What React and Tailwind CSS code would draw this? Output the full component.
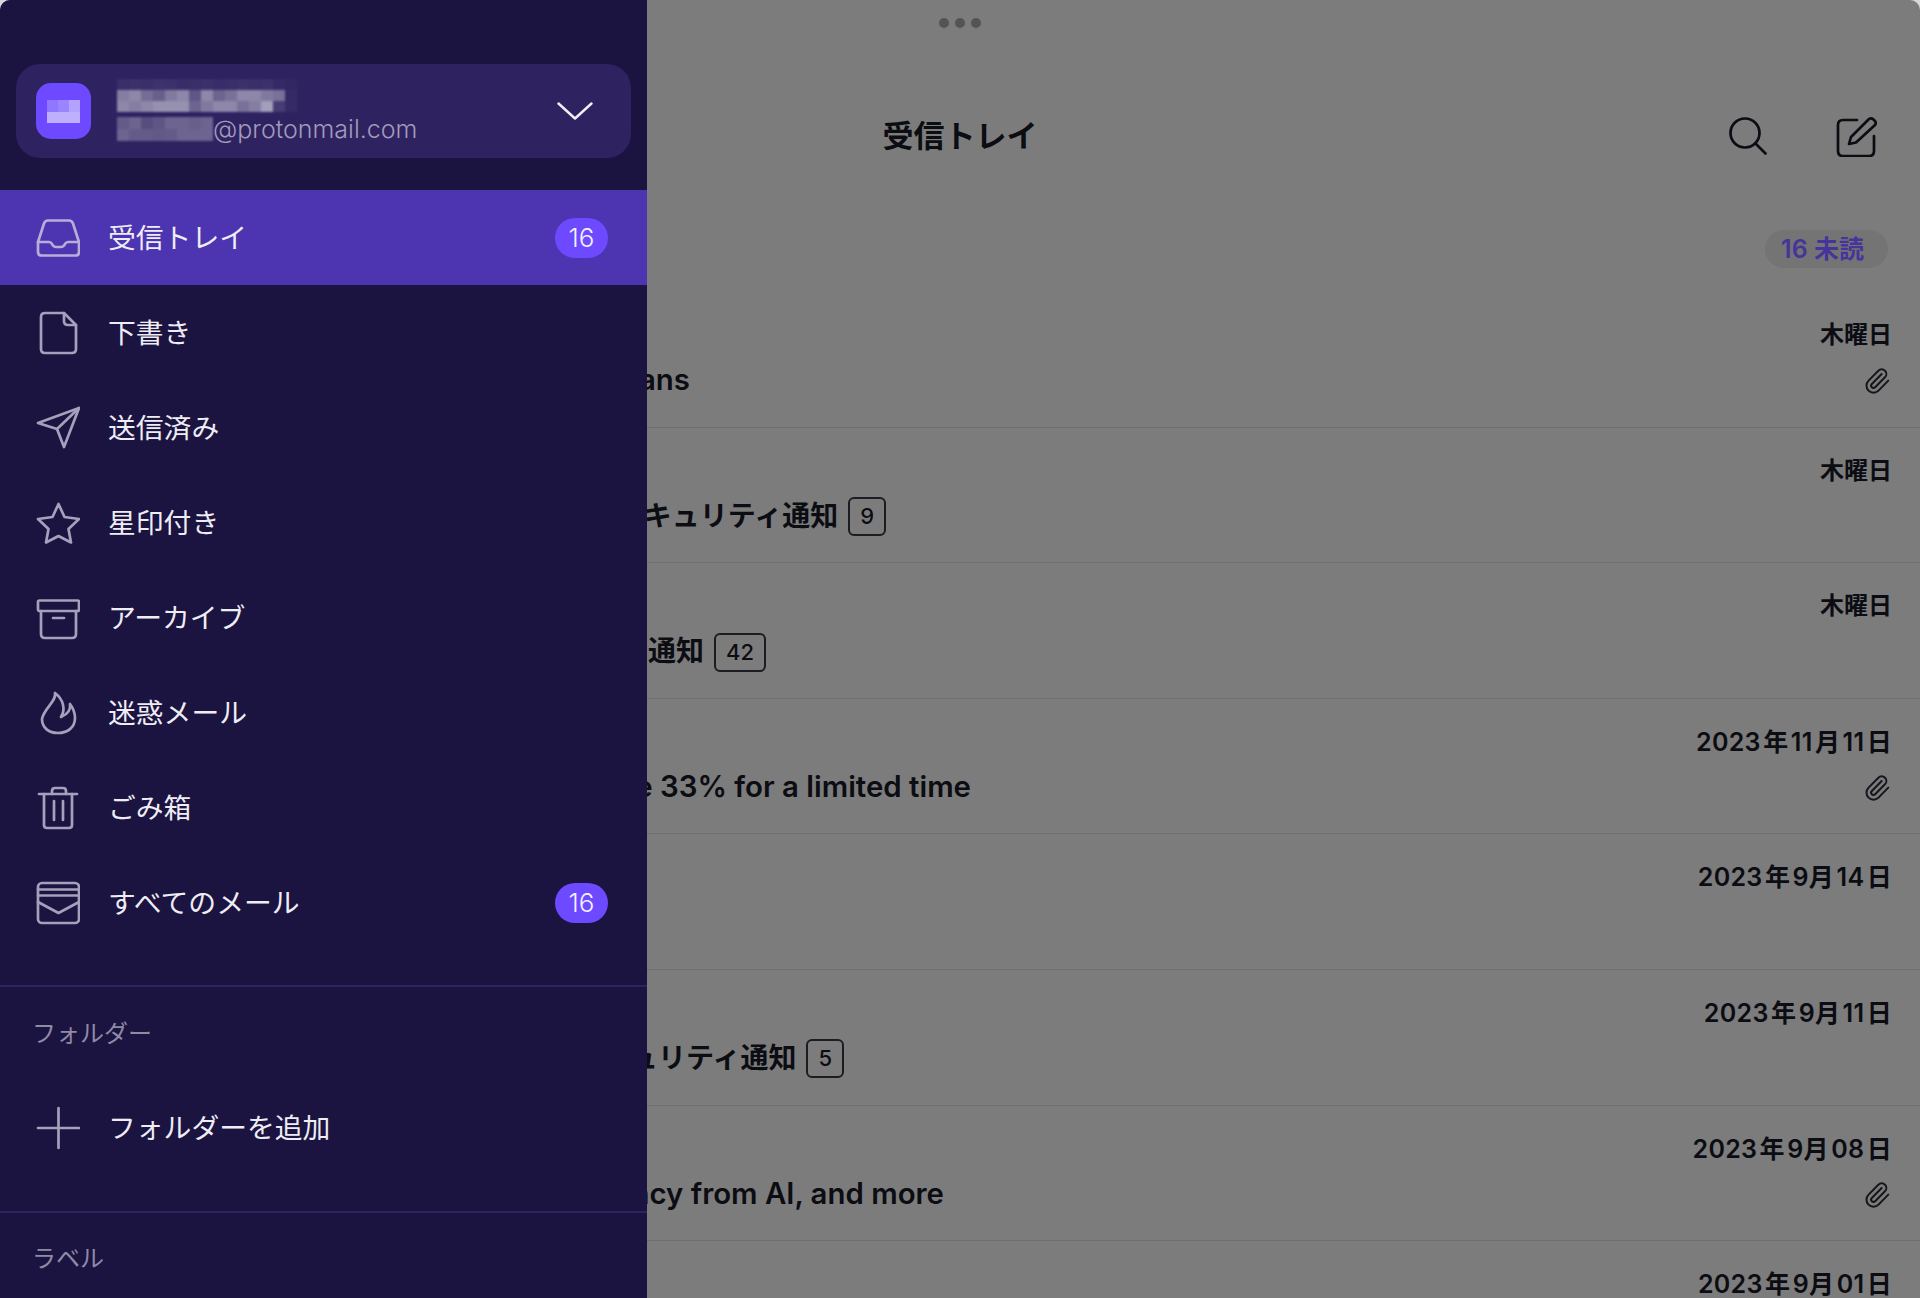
import { Fragment } from "react";

const navItems = [
  { label: "受信トレイ", icon: "inbox", count: 16, active: true },
  { label: "下書き", icon: "draft" },
  { label: "送信済み", icon: "sent" },
  { label: "星印付き", icon: "star" },
  { label: "アーカイブ", icon: "archive" },
  { label: "迷惑メール", icon: "spam" },
  { label: "ごみ箱", icon: "trash" },
  { label: "すべてのメール", icon: "all", count: 16 },
];

const mails = [
  { date: "木曜日", short: true, subject: "ans", width: "w-[690px] text-[29.4px]", clip: true },
  { date: "木曜日", short: true, subject: "キュリティ通知", width: "w-[886px] text-[28px]", count: 9 },
  { date: "木曜日", short: true, subject: "通知", width: "w-[766px] text-[28px]", count: 42 },
  { date: "2023\u200a年\u200a11\u200a月\u200a11\u200a日", subject: "e 33% for a limited time", width: "w-[971px] text-[29.4px]", clip: true },
  { date: "2023\u200a年\u200a9月\u200a14\u200a日" },
  { date: "2023\u200a年\u200a9月\u200a11\u200a日", subject: "ュリティ通知", width: "w-[844px] text-[28px]", count: 5 },
  { date: "2023\u200a年\u200a9月\u200a08\u200a日", subject: "ncy from AI, and more", width: "w-[944px] text-[29.4px]", clip: true },
  { date: "2023\u200a年\u200a9月\u200a01\u200a日" },
];

const nameMosaic = [
  [0.06, 0.07, 0.06, 0.08, 0.07, 0.05, 0.06, 0.07, 0.05, 0.06, 0.07, 0.06, 0.07, 0.04, 0.02],
  [0.42, 0.46, 0.34, 0.28, 0.4, 0.46, 0.24, 0.46, 0.3, 0.36, 0.46, 0.46, 0.4, 0.36, 0.04],
  [0.46, 0.42, 0.46, 0.5, 0.5, 0.5, 0.3, 0.4, 0.46, 0.46, 0.36, 0.42, 0.56, 0.12, 0.04],
];

const emailMosaic = [
  [0.26, 0.3, 0.2, 0.24, 0.3, 0.3, 0.28, 0.3],
  [0.3, 0.26, 0.26, 0.25, 0.26, 0.3, 0.3, 0.3],
];

function NavIcon({ name }) {
  return (
    <svg width="44" height="44" viewBox="0 0 44 44" fill="none" stroke="currentColor" strokeWidth="2.7" strokeLinecap="round" strokeLinejoin="round" className="shrink-0">
      {name === "inbox" && (
        <Fragment>
          <path d="M2 26 8 7.5Q9 4.5 12 4.5H33Q36 4.5 37 7.5L43 26V36Q43 39.5 39.5 39.5H5.5Q2 39.5 2 36Z" />
          <path d="M2 26H13Q15 26 16 28 17.5 31 20 31H25Q27.5 31 29 28 30 26 32 26H43" />
        </Fragment>
      )}
      {name === "draft" && (
        <Fragment>
          <path d="M9 2H28L40 14V38Q40 42 36 42H9Q5 42 5 38V6Q5 2 9 2Z" />
          <path d="M28 2V10Q28 14 32 14H40" />
        </Fragment>
      )}
      {name === "sent" && (
        <Fragment>
          <path d="M43 2 2 17 21 23 28 41Z" />
          <path d="M43 2 21 23" />
        </Fragment>
      )}
      {name === "star" && <path d="M22.5 3 28.5 16 43 18 32.5 28 35 41.5 22.5 35 10 41.5 12.5 28 2 18 16.5 16Z" />}
      {name === "archive" && (
        <Fragment>
          <rect x="2" y="4.5" width="41" height="10.5" rx="1.5" />
          <path d="M5 15V38Q5 42 9 42H36Q40 42 40 38V15" />
          <path d="M17 22H28" />
        </Fragment>
      )}
      {name === "spam" && (
        <path d="M19 2C21 10 8 17 6 28 6 37 13 42 22 42 32 42 39 36 39 27 39 22 37 17 34 13 35 19 32 23 25 26 30 18 27 8 19 2Z" />
      )}
      {name === "trash" && (
        <Fragment>
          <path d="M3 8H41" />
          <path d="M16 8V5Q16 2 19 2H27Q30 2 30 5V8" />
          <path d="M8 8V39Q8 42 11 42H33Q36 42 36 39V8" />
          <path d="M18 15V34M27 15V34" />
        </Fragment>
      )}
      {name === "all" && (
        <Fragment>
          <rect x="2" y="2" width="41" height="40" rx="4" />
          <path d="M2 8.5H43M2 14.5H43" />
          <path d="M2 21 22.5 32 43 21" />
        </Fragment>
      )}
      {name === "plus" && <path d="M22.5 2V42M2 22H43" />}
    </svg>
  );
}

function Mosaic({ rows, cell, cellH }) {
  return (
    <svg width={rows[0].length * cell} height={rows.length * cellH} className="block shrink-0 blur-[1px]">
      {rows.map((row, y) =>
        row.map((o, x) => <rect key={x} x={x * cell} y={y * cellH} width={cell} height={cellH} fill="#ffffff" fillOpacity={o} />)
      )}
    </svg>
  );
}

function NavRow({ item }) {
  return (
    <div className={`flex h-[95px] items-center pl-[36px] pr-[39px] ${item.active ? "bg-[#4d34b0] text-[#b6aed8]" : "text-[#a5a0bb]"}`}>
      <NavIcon name={item.icon} />
      <span className="ml-[28px] flex-1 pt-[3px] text-[27.8px] font-normal text-[#eeedf4]">{item.label}</span>
      {item.count && (
        <span className="flex h-[40px] w-[53px] items-center justify-center rounded-full bg-[#6d4aff] text-[26px] font-light text-[#f3f1ff]">
          {item.count}
        </span>
      )}
    </div>
  );
}

function Sidebar() {
  return (
    <aside className="absolute inset-y-0 left-0 z-10 flex w-[647px] flex-col overflow-hidden bg-[#1b1340]">
      {/* Account */}
      <div className="mx-[16px] mt-[64px] flex h-[94px] shrink-0 items-center rounded-[24px] bg-[#2e2260] pl-[20px] pr-[38px]">
        <div className="flex h-[56px] w-[55px] shrink-0 items-center justify-center rounded-[15px] bg-[#6d4aff]">
          <svg width="33" height="23" className="block blur-[0.6px]">
            <rect x="0" y="0" width="11" height="12" fill="#8f78ff" />
            <rect x="11" y="0" width="11" height="12" fill="#9a85ff" />
            <rect x="22" y="0" width="11" height="12" fill="#b3a2ff" />
            <rect x="0" y="12" width="33" height="11" fill="#bfb0ff" />
          </svg>
        </div>
        <div className="ml-[26px] flex flex-1 flex-col">
          <Mosaic rows={nameMosaic} cell={12} cellH={11} />
          <div className="mt-[3px] flex items-center">
            <Mosaic rows={emailMosaic} cell={12} cellH={12} />
            <span className="text-[25px] leading-[28px] font-light text-[#a29bbb]">@protonmail.com</span>
          </div>
        </div>
        <svg width="36" height="18" viewBox="0 0 36 18" fill="none" stroke="#f1f0f6" strokeWidth="2.4" strokeLinecap="round" strokeLinejoin="round">
          <path d="M1.5 1.5 18 16.5 34.5 1.5" />
        </svg>
      </div>

      {/* Folders */}
      <nav className="mt-[32px] flex shrink-0 flex-col">
        {navItems.map((item) => (
          <NavRow key={item.label} item={item} />
        ))}
      </nav>

      <div className="mt-[35px] shrink-0 border-t-2 border-[#2e2260]">
        <p className="flex h-[93px] items-center pl-[32px] text-[24px] font-normal text-[#8f8aa6]">フォルダー</p>
        <NavRow item={{ label: "フォルダーを追加", icon: "plus" }} />
      </div>

      <div className="mt-[36px] shrink-0 border-t-2 border-[#2e2260]">
        <p className="flex h-[91px] items-center pl-[32px] text-[24px] font-normal text-[#8f8aa6]">ラベル</p>
      </div>
    </aside>
  );
}

function MailRow({ mail }) {
  return (
    <div className="flex h-[135.6px] shrink-0 flex-col border-b border-[#716e6e] pr-[28px] pt-[26px]">
      <div className={`h-[34px] text-right leading-[34px] font-semibold ${mail.short ? "text-[24px]" : "text-[25px] tracking-[0.3px]"}`}>
        {mail.date}
      </div>
      <div className="mt-[9px] flex h-[40px] items-center justify-between">
        {mail.subject ? (
          <div className={`${mail.width} flex shrink-0 items-center justify-end gap-[10px] whitespace-nowrap font-semibold`}>
            <span className="pb-[2px]">{mail.subject}</span>
            {mail.count && (
              <span className="flex h-[39px] items-center justify-center rounded-[6px] border-2 border-[#1c1c22] px-[10px] text-[22px] font-medium">
                {mail.count}
              </span>
            )}
          </div>
        ) : (
          <div />
        )}
        {mail.clip && (
          <svg width="28" height="28" viewBox="0 0 24 24" fill="none" stroke="#15151b" strokeWidth="1.7" strokeLinecap="round" strokeLinejoin="round" className="mr-[1px]">
            <path d="m16 6-8.414 8.586a2 2 0 0 0 2.829 2.829l8.414-8.586a4 4 0 1 0-5.657-5.657l-8.379 8.551a6 6 0 1 0 8.485 8.485l8.379-8.551" />
          </svg>
        )}
      </div>
    </div>
  );
}

export default function App() {
  return (
    <div className="h-[1298px] w-full bg-[#d8d8d8]">
      <div className="relative h-full overflow-hidden rounded-t-[10px] bg-[#7c7c7c] font-['Inter','Noto_Sans_CJK_JP',sans-serif] text-[#0c0c13]">
        <Sidebar />

        {/* Mail list behind the drawer */}
        <main className="flex h-full flex-col">
          <div className="flex h-[46px] shrink-0 items-center justify-center gap-[6px]">
            <span className="size-[10px] rounded-full bg-[#545454]" />
            <span className="size-[10px] rounded-full bg-[#545454]" />
            <span className="size-[10px] rounded-full bg-[#545454]" />
          </div>

          <header className="mt-[44px] grid h-[92px] shrink-0 grid-cols-[1fr_auto_1fr] items-center px-[43px]">
            <div />
            <h1 className="text-[31px] font-semibold">受信トレイ</h1>
            <div className="flex items-center justify-end gap-[69px]">
              <svg width="38" height="38" viewBox="0 0 38 38" fill="none" stroke="#0c0c13" strokeWidth="2.7" strokeLinecap="round">
                <circle cx="16" cy="16" r="14.5" />
                <path d="M26.5 26.5 36.5 36.5" />
              </svg>
              <svg width="41" height="41" viewBox="0 0 41 41" fill="none" stroke="#0c0c13" strokeWidth="2.7" strokeLinecap="round" strokeLinejoin="round">
                <path d="M21 4H7Q2 4 2 9V35Q2 40 7 40H33Q38 40 38 35V20" />
                <path d="M13 28 15 21 33 3Q35 1.5 37.5 3.5L39 5Q40.5 7 39 9L20 26.5Z" />
              </svg>
            </div>
          </header>

          <div className="mt-[48px] flex shrink-0 justify-end pr-[32px]">
            <span className="flex h-[38px] w-[123px] items-center justify-center rounded-full bg-[#747474] pr-[8px] pt-[1px] text-[25px] font-semibold text-[#46349a]">
              16 未読
            </span>
          </div>

          <div className="mt-[24px] flex shrink-0 flex-col">
            {mails.map((mail) => (
              <MailRow key={mail.date + mail.subject} mail={mail} />
            ))}
          </div>
        </main>
      </div>
    </div>
  );
}
